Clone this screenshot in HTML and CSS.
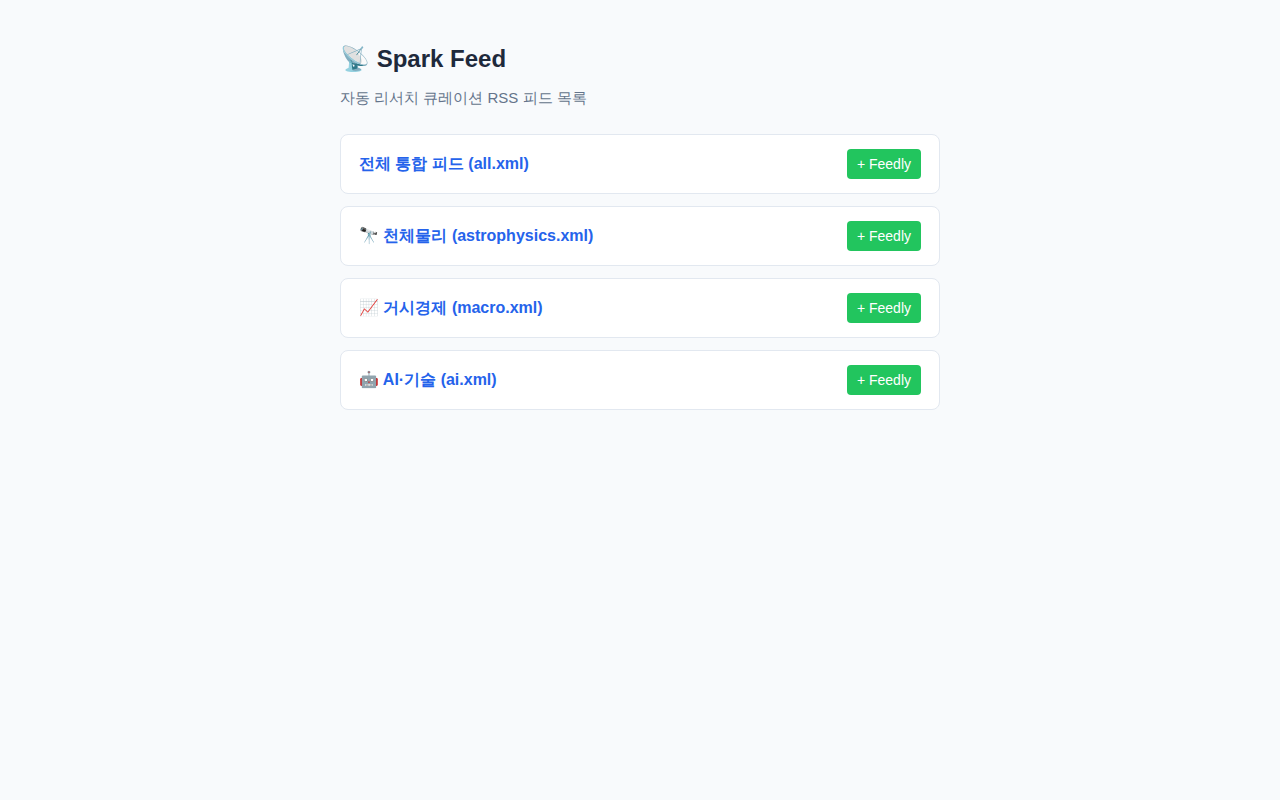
FILE: index.html
```html
<!DOCTYPE html>
<html lang="ko">

<head>
	<meta charset="UTF-8">
	<meta name="viewport" content="width=device-width, initial-scale=1.0">
	<title>Spark Feed</title>
	<link rel="stylesheet" href="styles.css">
</head>

<body>
	<h1>📡 Spark Feed</h1>
	<p class="sub">자동 리서치 큐레이션 RSS 피드 목록</p>
	<ul class="feeds">
		<li class="feed">
			<a class="feed-link" href="all.xml">전체 통합 피드 (all.xml)</a>
			<a class="feedly" href="#">+ Feedly</a>
		</li>
		<li class="feed">
			<a class="feed-link" href="astrophysics.xml">🔭 천체물리 (astrophysics.xml)</a>
			<a class="feedly" href="#">+ Feedly</a>
		</li>
		<li class="feed">
			<a class="feed-link" href="macro.xml">📈 거시경제 (macro.xml)</a>
			<a class="feedly" href="#">+ Feedly</a>
		</li>
		<li class="feed">
			<a class="feed-link" href="ai.xml">🤖 AI·기술 (ai.xml)</a>
			<a class="feedly" href="#">+ Feedly</a>
		</li>
	</ul>
</body>

</html>
```
FILE: styles.css
```css
body {
	max-width: 600px;
	margin: 40px auto;
	padding: 0 20px;
	font-family: "Liberation Sans", sans-serif;
	color: #1e293b;
	background: #f8fafc;
}

h1 {
	margin: 0 0 8px;
	font-size: 24px;
	line-height: 38px;
}

.sub {
	margin: 0 0 24px;
	font-size: 15px;
	line-height: 24px;
	color: #64748b;
}

.feeds {
	margin: 0;
	padding: 0;
	list-style: none;
}

.feed {
	display: flex;
	align-items: center;
	justify-content: space-between;
	margin-bottom: 12px;
	padding: 14px 18px;
	background: #fff;
	border: 1px solid #e2e8f0;
	border-radius: 8px;
}

.feed-link {
	font-size: 16px;
	font-weight: 600;
	line-height: 26px;
	color: #2563eb;
	text-decoration: none;
}

.feedly {
	padding: 4px 10px;
	font-size: 14px;
	line-height: 22px;
	color: #fff;
	background: #22c55e;
	border-radius: 4px;
	text-decoration: none;
}
```
